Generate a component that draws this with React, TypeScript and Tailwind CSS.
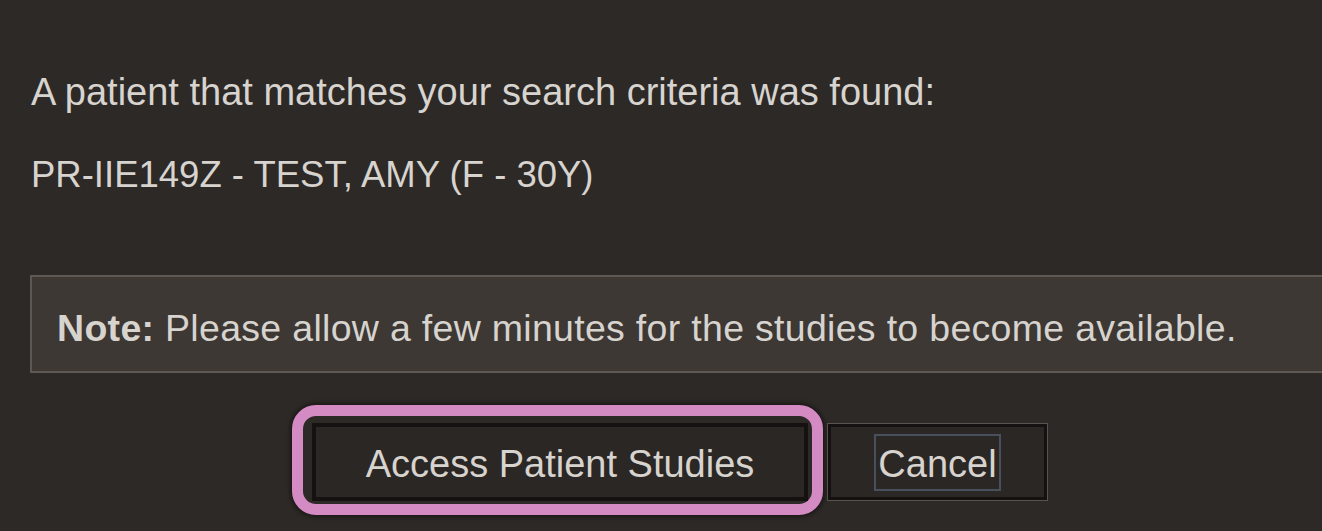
export default function App() {
  return (
    <div
      className="w-[1322px] h-[531px] overflow-hidden bg-[#2d2926] text-[#d7d3ce] pl-[31px] pt-[74px]"
      style={{ fontFamily: '"Liberation Sans", Arial, sans-serif' }}
    >
      <p className="text-[38px] leading-[37px]">
        A patient that matches your search criteria was found:
      </p>
      <p className="mt-[45px] text-[36.5px] leading-[37px]">
        PR-IIE149Z - TEST, AMY (F - 30Y)
      </p>
      <div className="mt-[82px] -ml-[1px] w-[1320px] h-[98px] border-2 border-[#5e5853] bg-[#3d3834] pl-[25px] pt-[33px]">
        <p className="text-[37.5px] leading-[37px] tracking-[0.3px]">
          <span className="font-bold">Note:</span> Please allow a few minutes for the studies to become available.
        </p>
      </div>
      <div className="mt-[50px] ml-[281px] flex items-start gap-[19px]">
        <div className="relative">
          <div className="absolute -left-[20px] -top-[18px] -right-[15px] -bottom-[14px] rounded-[24px] border-[11px] border-[#d48bc3] shadow-[0_0_4px_2px_rgba(0,0,0,0.45)]" />
          <button className="relative w-[496px] h-[78px] border-[4px] border-[#141110] bg-[#2b2724] text-[38px] leading-[38px] text-[#d7d3ce] flex items-center justify-center pt-[3px]">
            Access Patient Studies
          </button>
        </div>
        <button className="w-[221px] h-[78px] border-[1px] border-[#5a544f] bg-[#2b2724] text-[38px] leading-[38px] text-[#d7d3ce] flex items-center justify-center shadow-[inset_0_0_0_3px_#141110]">
          <span className="h-[57px] px-[2px] border-2 border-[#48505e] flex items-center pt-[3px]">Cancel</span>
        </button>
      </div>
    </div>
  );
}
